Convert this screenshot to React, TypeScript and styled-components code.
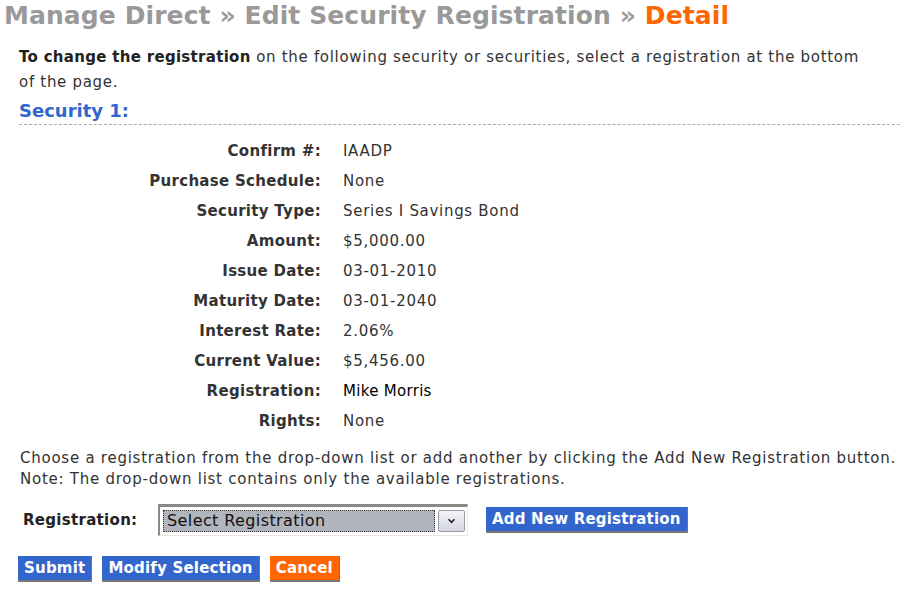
import React from 'react';
import styled, { createGlobalStyle } from 'styled-components';

const GlobalStyle = createGlobalStyle`
  body {
    margin: 0;
    background: #ffffff;
    font-family: "DejaVu Sans", Verdana, sans-serif;
    color: #333333;
  }
`;

const details = [
  { label: 'Confirm #:', value: 'IAADP' },
  { label: 'Purchase Schedule:', value: 'None' },
  { label: 'Security Type:', value: 'Series I Savings Bond' },
  { label: 'Amount:', value: '$5,000.00' },
  { label: 'Issue Date:', value: '03-01-2010' },
  { label: 'Maturity Date:', value: '03-01-2040' },
  { label: 'Interest Rate:', value: '2.06%' },
  { label: 'Current Value:', value: '$5,456.00' },
  { label: 'Registration:', value: 'Mike Morris', plain: true },
  { label: 'Rights:', value: 'None' },
];

const App = () => {
  return (
    <Page>
      <GlobalStyle />
      <Title>
        <span>Manage Direct » Edit Security Registration » </span>
        <Current>Detail</Current>
      </Title>
      <Content>
        <Intro>
          <strong>To change the registration</strong>
          <span> on the following security or securities, select a registration at the bottom of the page.</span>
        </Intro>
        <SectionHead>Security 1:</SectionHead>
        <DetailGrid>
          {details.map((d) => (
            <React.Fragment key={d.label}>
              <Label>{d.label}</Label>
              <Value $plain={d.plain}>{d.value}</Value>
            </React.Fragment>
          ))}
        </DetailGrid>
        <Note>
          Choose a registration from the drop-down list or add another by clicking the Add New Registration button.
          <br />
          Note: The drop-down list contains only the available registrations.
        </Note>
        <SelectRow>
          <SelectLabel>Registration:</SelectLabel>
          <SelectBox>
            <SelectText>Select Registration</SelectText>
            <SelectArrow>
              <svg width="9" height="6" viewBox="0 0 9 6">
                <path d="M1.5 1.2 L4.5 4.3 L7.5 1.2" stroke="#222" strokeWidth="1.6" fill="none" />
              </svg>
            </SelectArrow>
          </SelectBox>
          <ActionButton $color="#3366cc">Add New Registration</ActionButton>
        </SelectRow>
        <ButtonRow>
          <ActionButton $color="#3366cc">Submit</ActionButton>
          <ActionButton $color="#3366cc">Modify Selection</ActionButton>
          <ActionButton $color="#ff6600">Cancel</ActionButton>
        </ButtonRow>
      </Content>
    </Page>
  );
};

const Page = styled.div`
  width: 900px;
  height: 590px;
  overflow: hidden;
`;

const Title = styled.h1`
  margin: 0;
  padding: 0 0 0 4px;
  font-size: 25px;
  line-height: 32px;
  font-weight: 700;
  letter-spacing: 0.1px;
  color: #999999;
  white-space: nowrap;
`;

const Current = styled.span`
  color: #ff6600;
`;

const Content = styled.div`
  padding: 0 0 0 19px;
`;

const Intro = styled.p`
  margin: 13px 0 0 0;
  font-size: 15px;
  line-height: 25px;
  letter-spacing: 0.7px;
  color: #333333;
  padding-right: 20px;

  strong {
    color: #222222;
    letter-spacing: 0.3px;
  }
`;

const SectionHead = styled.h2`
  margin: 4px 0 0 0;
  padding-bottom: 1px;
  font-size: 18px;
  line-height: 24px;
  font-weight: 700;
  color: #3366cc;
  border-bottom: 1px dashed #aaaaaa;
`;

const DetailGrid = styled.div`
  display: grid;
  grid-template-columns: 302px auto;
  column-gap: 22px;
  grid-auto-rows: 30px;
  margin-top: 11px;
  align-items: center;
`;

const Label = styled.div`
  text-align: right;
  font-size: 15px;
  font-weight: 700;
  letter-spacing: 0.3px;
  color: #333333;
`;

const Value = styled.div<{ $plain?: boolean }>`
  font-size: 15px;
  letter-spacing: ${(p) => (p.$plain ? '0.3px' : '0.7px')};
  color: ${(p) => (p.$plain ? '#000000' : '#333333')};
`;

const Note = styled.p`
  margin: 12px 0 0 1px;
  font-size: 15px;
  line-height: 21px;
  letter-spacing: 0.75px;
  color: #333333;
  white-space: nowrap;
`;

const SelectRow = styled.div`
  display: flex;
  align-items: center;
  margin-top: 14px;
  padding-left: 4px;
`;

const SelectLabel = styled.span`
  width: 135px;
  font-size: 15px;
  font-weight: 700;
  letter-spacing: 0.3px;
  color: #222222;
`;

const SelectBox = styled.div`
  box-sizing: border-box;
  width: 310px;
  height: 32px;
  display: flex;
  align-items: center;
  gap: 3px;
  padding: 2px 2px 2px 3px;
  border-top: 3px solid #888888;
  border-left: 2px solid #888888;
  border-right: 1px solid #e8e8e0;
  border-bottom: 1px solid #e8e8e0;
  background: #ffffff;
  margin-right: 18px;
`;

const SelectText = styled.div`
  flex: 1;
  height: 20px;
  background: #b1b5bd;
  border: 1px dotted #333333;
  font-size: 16px;
  line-height: 20px;
  letter-spacing: 0.4px;
  color: #111111;
  padding-left: 3px;
`;

const SelectArrow = styled.div`
  width: 25px;
  height: 20px;
  display: flex;
  align-items: center;
  justify-content: center;
  background: linear-gradient(#f4f4f8, #d4d6e0);
  border: 1px solid #9a9caa;
  border-radius: 2px;
`;

const ButtonRow = styled.div`
  display: flex;
  gap: 10px;
  margin-top: 20px;
  margin-left: -1px;
`;

const ActionButton = styled.button<{ $color: string }>`
  height: 26px;
  padding: 0 6px;
  background: ${(p) => p.$color};
  color: #ffffff;
  font-family: "DejaVu Sans", Verdana, sans-serif;
  font-size: 15px;
  font-weight: 700;
  letter-spacing: 0.2px;
  border: none;
  border-right: 1px solid #777777;
  border-bottom: 2px solid #777777;
  cursor: pointer;
`;

export default App;
